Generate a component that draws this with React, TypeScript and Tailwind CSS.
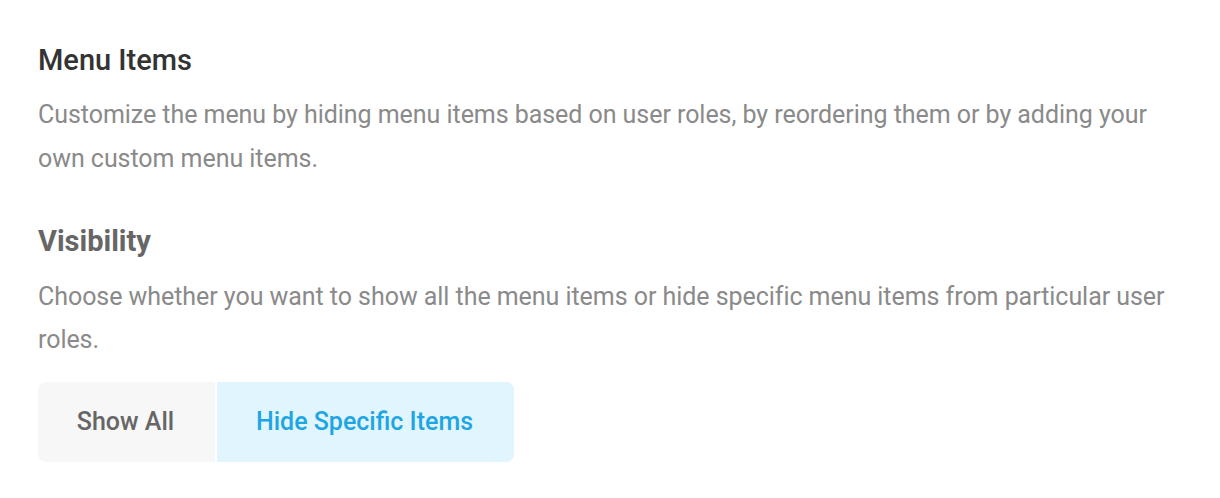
export default function App() {
  return (
    <div className="w-[1220px] h-[498px] bg-white pl-[38px] pt-[40px]" style={{ fontFamily: "Roboto, sans-serif" }}>
      <h2 className="text-[29px] leading-[40px] font-medium text-[#333333]">Menu Items</h2>
      <p className="mt-[13px] text-[25px] leading-[44px] text-[#8a8a8a] w-[1140px] tracking-[-0.05px]">
        Customize the menu by hiding menu items based on user roles, by reordering them or by adding your own custom menu items.
      </p>
      <h3 className="mt-[40px] text-[29px] leading-[40px] font-bold text-[#666666]">Visibility</h3>
      <p className="mt-[14px] text-[25px] leading-[43px] text-[#8a8a8a] w-[1140px] tracking-[-0.05px]">
        Choose whether you want to show all the menu items or hide specific menu items from particular user roles.
      </p>
      <div className="mt-[21px] flex w-[476px] h-[80px] gap-[2px]">
        <button className="w-[177px] rounded-l-[8px] bg-[#f7f7f7] text-[25px] font-medium text-[#666666] pr-[2px]">Show All</button>
        <button className="flex-1 rounded-r-[8px] bg-[#e1f5fe] text-[25px] font-medium text-[#1ea5e4] pr-[2px]">Hide Specific Items</button>
      </div>
    </div>
  );
}
